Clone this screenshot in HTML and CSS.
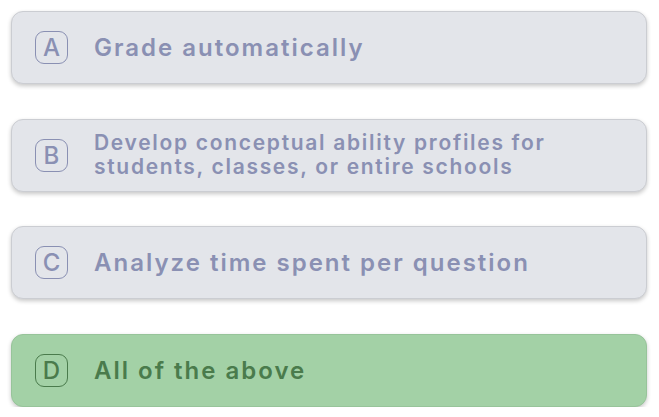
FILE: index.html
```html
<!DOCTYPE html>
<html>

<head>
    <title>Quiz Options</title>
    <link rel="stylesheet" href="styles.css">
</head>

<body>

    <div class="options">
        <div class="option">
            <span class="letter">A</span>
            <span class="text">Grade automatically</span>
        </div>
        <div class="option">
            <span class="letter">B</span>
            <span class="text small">Develop conceptual ability profiles for<br>students, classes, or entire schools</span>
        </div>
        <div class="option">
            <span class="letter">C</span>
            <span class="text">Analyze time spent per question</span>
        </div>
        <div class="option correct">
            <span class="letter">D</span>
            <span class="text">All of the above</span>
        </div>
    </div>

</body>

</html>
```

FILE: styles.css
```css
body {
    margin: 0;
    background: #ffffff;
    font-family: "Inter", "Noto Sans", sans-serif;
}

.options {
    display: flex;
    flex-direction: column;
    gap: 34.5px;
    padding: 11px 12px 0 11px;
}

.option {
    display: flex;
    align-items: center;
    gap: 26px;
    height: 71px;
    padding-left: 23px;
    background-color: #e3e5ea;
    border: 1px solid #cbcdd2;
    border-radius: 12px;
    box-shadow: 0 2px 4px rgba(0, 0, 0, 0.22);
    color: #8a90b3;
}

.letter {
    display: flex;
    align-items: center;
    justify-content: center;
    width: 31px;
    height: 31px;
    border: 1.5px solid currentColor;
    border-radius: 9px;
    font-size: 24px;
    font-weight: 500;
    flex-shrink: 0;
}

.text {
    font-size: 24px;
    font-weight: 600;
    letter-spacing: 2px;
}

.text.small {
    font-size: 21px;
    line-height: 24px;
    letter-spacing: 1.7px;
}

.correct {
    background-color: #a3d1a6;
    border-color: #97c49a;
    color: #4a7b4c;
}
```
